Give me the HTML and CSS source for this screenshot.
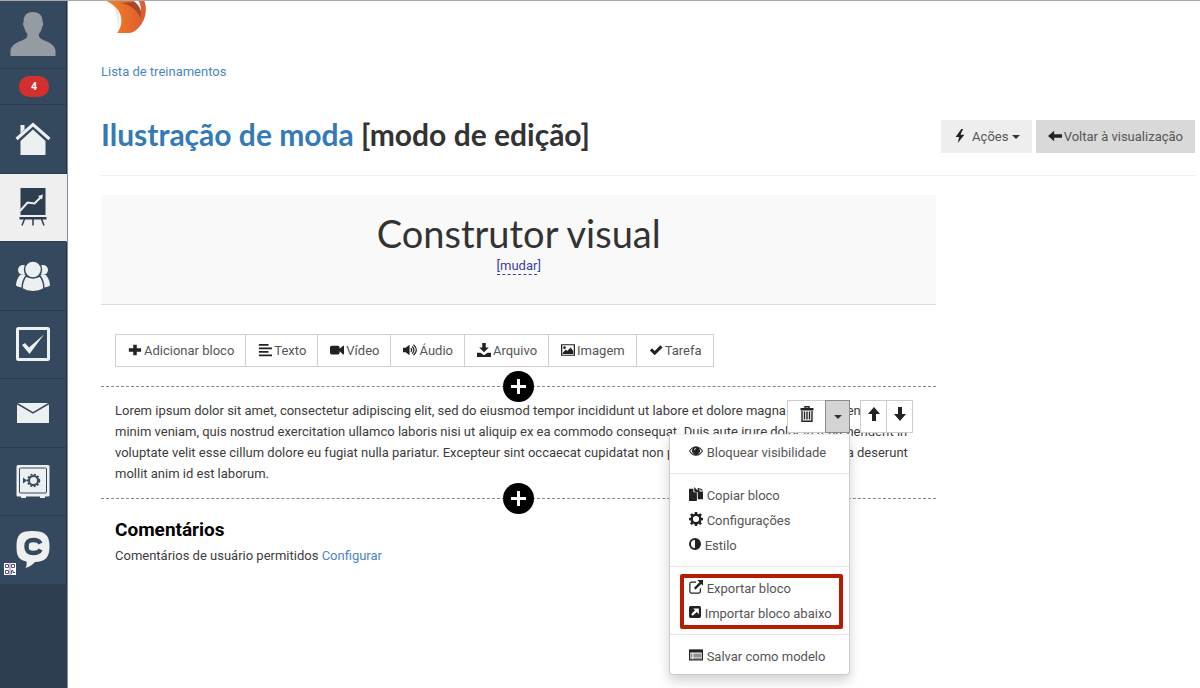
FILE: index.html
```html
<!DOCTYPE html>
<html lang="pt-br">
  <head>
    <meta charset="UTF-8" />
    <meta name="viewport" content="width=device-width, initial-scale=1.0" />
    <title>Ilustração de moda</title>
    <link rel="stylesheet" href="styles.css">
  </head>

  <body>

    <nav class="sidebar">
      <a class="item perfil" href="#" aria-label="Perfil">
        <svg width="46" height="46" viewBox="0 0 46 46"><path fill="#959ba3" d="M23 1c6.500 0 9.800 4 9.600 10 1 .5.800 3.500-.8 6-.5 3-1.500 4.500-3 6 0 3 .8 4 3.500 5.500 5 2.500 12.500 4.500 13.200 11V45H.5v-5.500C1.200 33 9 31 14 28.500c2.700-1.500 3.500-2.500 3.500-5.500-1.500-1.500-2.500-3-3-6-1.600-2.500-1.800-5.500-.8-6C13.200 5 16.500 1 23 1z"/></svg>
      </a>
      <a class="item avisos" href="#" aria-label="Avisos"><span class="contador">4</span></a>
      <a class="item" href="#" aria-label="Início">
        <svg width="36" height="36" viewBox="0 0 36 36"><path fill="#ecf0f1" d="M5.500 4h4v4.500l-4 4zM18 8.500 30.500 20v14h-25V20z"/><path fill="none" stroke="#34495e" stroke-width="2" d="M2 20.500 18 6l16 14.500"/><path fill="none" stroke="#ecf0f1" stroke-width="3" d="M1.500 18 18 3.500 34.500 18"/></svg>
      </a>
      <a class="item ativo" href="#" aria-label="Treinamentos">
        <svg width="28" height="40" viewBox="0 0 28 40"><path fill="#2c3e50" d="M1.500 1h25v27h-25zM.5 30h27v2.500H.5z"/><path fill="none" stroke="#efefef" stroke-width="2" d="M1 24l7.500-8.500 7 1L22 10"/><path fill="#efefef" d="M19 9l5-1.500-1 5z"/><path fill="none" stroke="#2c3e50" stroke-width="1.500" d="M5.500 32 3 38.500M14 32v6.500M22.500 32l2.500 6.500"/></svg>
      </a>
      <a class="item" href="#" aria-label="Usuários">
        <svg width="36" height="32" viewBox="0 0 36 32"><g fill="#ecf0f1"><circle cx="8" cy="10" r="5"/><circle cx="28" cy="10" r="5"/><path d="M5 15c-2.500 3-4 7-4 10.500 2 1.500 5 2 7 2L11 15zM31 15c2.500 3 4 7 4 10.500-2 1.500-5 2-7 2L25 15z"/></g><g fill="#ecf0f1" stroke="#34495e" stroke-width="1.500"><path d="M11 16c3 1.500 11 1.500 14 0 3 4 4 9 3.800 13-6 3.500-15.600 3.500-21.600 0C7 25 8 20 11 16z"/><circle cx="18" cy="9.500" r="8.500"/></g></svg>
      </a>
      <a class="item" href="#" aria-label="Tarefas">
        <svg width="36" height="36" viewBox="0 0 36 36"><rect x="2.500" y="2.500" width="31" height="31" rx="1" fill="none" stroke="#ecf0f1" stroke-width="3"/><path fill="#ecf0f1" d="M7 19l3-2 4 4.500L29 8.500 14.500 28z"/></svg>
      </a>
      <a class="item" href="#" aria-label="Mensagens">
        <svg width="34" height="22" viewBox="0 0 34 22"><path fill="#ecf0f1" d="M1 1h32v20H1z"/><path fill="none" stroke="#34495e" stroke-width="1.500" d="M1 1.500l16 9.500 16-9.500"/></svg>
      </a>
      <a class="item" href="#" aria-label="Cofre">
        <svg width="36" height="36" viewBox="0 0 36 36"><path fill="#ecf0f1" d="M3 2h30q1.500 0 1.500 1.500v29q0 1-1.500 1h-3V35h-5v-1.500H11V35H6v-1.500H3q-1.500 0-1.500-1v-29Q1.500 2 3 2z"/><rect x="4.500" y="5" width="27" height="25" rx="1" fill="none" stroke="#34495e"/><circle cx="18.500" cy="17.500" r="4.500" fill="none" stroke="#34495e" stroke-width="2"/><circle cx="18.500" cy="17.500" r="6" fill="none" stroke="#34495e" stroke-width="1.500" stroke-dasharray="2 1.500"/><path fill="#34495e" d="M8 14.500l4 3-4 3z"/></svg>
      </a>
      <a class="item" href="#" aria-label="Suporte">
        <svg width="36" height="40" viewBox="0 0 36 40"><path fill="#efefef" d="M17 1c13 0 17.500 4 17.500 15.500S30 31.500 20 32c-2.500 3-6 5-9.500 6 1-2 1.500-4 1-6.500C3.500 30 1.500 26 1.500 16.500 1.500 5 5 1 17 1z"/><path fill="none" stroke="#34495e" stroke-width="4.500" d="M25.500 13.500C24 10.500 22 10 18.500 10c-5.500 0-7 2-7 6.500s1.500 6.500 7 6.500c3.500 0 5.500-.5 7-3.500"/></svg>
        <svg class="qr" width="12" height="12" viewBox="0 0 12 12"><path fill="#fff" d="M0 0h12v12H0z"/><path fill="none" stroke="#4a5a70" d="M1.500 1.500h3v3h-3zM7.500 1.500h3v3h-3zM1.500 7.500h3v3h-3zM7.500 11V7.500H9v2h2"/><path stroke="#b05fd0" d="M6 0v12"/></svg>
      </a>
    </nav>

    <main class="conteudo">
      <a class="logo" href="#" aria-label="Página inicial">
        <svg width="48" height="33" viewBox="0 0 48 34"><defs><linearGradient id="laranja"><stop offset="0" stop-color="#f58220"/><stop offset="1" stop-color="#dc5a32"/></linearGradient></defs><path fill="#e5e5e5" d="M9 1c8 5 10 14 8 27C17 18 15 8 9 1z"/><path fill="url(#laranja)" d="M5 0h39c3 9 1 17-2 22-4 7-9 11-14 11H16c7-10 7-24-11-33z"/><path fill="#a8482a" d="M19 2c9 1 17 6 21 16 1-6 0-12-5-17z"/><path fill="#fff" d="M33 0h5c2 3 2.500 7 2.500 10C39 6 37 3 33 0z"/></svg>
      </a>

      <a class="voltar-lista" href="#">Lista de treinamentos</a>

      <header class="topo">
        <h1><a href="#">Ilustração de moda</a> [modo de edição]</h1>
        <div class="acoes">
          <button class="btn-acoes" type="button"><svg class="icone" viewBox="0 0 16 16"><path d="M9.500 0 3 9h4l-1.500 7L13 6.500H8.500L11.500 0z"/></svg> Ações <span class="seta"></span></button>
          <button class="btn-voltar" type="button"><svg class="icone" viewBox="0 0 16 16"><path d="M0 8l7-6v4h9v4H7v4z"/></svg>Voltar à visualização</button>
        </div>
      </header>

      <div class="grade">
        <section class="construtor">
          <div class="cabecalho">
            <h2>Construtor visual</h2>
            <a href="#"><span>[mudar</span>]</a>
          </div>

          <div class="barra">
            <button type="button"><svg class="icone" viewBox="0 0 16 16"><path d="M6 2h4v4h5v4h-5v4H6v-4H1V6h5z"/></svg>Adicionar bloco</button>
            <button type="button"><svg class="icone" viewBox="0 0 16 16"><path d="M1 1h11v2H1zM1 5h15v2H1zM1 9h11v2H1zM1 13h15v2H1z"/></svg>Texto</button>
            <button type="button"><svg class="icone" viewBox="0 0 16 16"><path d="M2 3h7q2 0 2 2v1.500L15 3h1v10h-1l-4-3.500V11q0 2-2 2H2q-2 0-2-2V5q0-2 2-2z"/></svg>Vídeo</button>
            <button type="button"><svg class="icone" viewBox="0 0 16 16"><path d="M0 5.500h3L7.500 2v12L3 10.500H0z"/><path class="traco" d="M9 6q2 2 0 4M10.500 4q4 4 0 8M12 2q6.500 6 0 12"/></svg>Áudio</button>
            <button type="button"><svg class="icone" viewBox="0 0 16 16"><path d="M6 0h4v5h3.500L8 10.500 2.500 5H6zM0 11h4l4 3 4-3h4v5H0z"/></svg>Arquivo</button>
            <button type="button"><svg class="icone" viewBox="0 0 16 16"><path class="traco" d="M.7 2h14.600v12H.7z"/><path d="M2 12.500V11l3.500-3.500L7 9l4-4 3 4v3.500z"/><circle cx="4" cy="5.300" r="1.500"/></svg>Imagem</button>
            <button type="button"><svg class="icone" viewBox="0 0 16 16"><path d="M1 8.500 3.500 6l3 3L13 2.500 15.500 5l-9 9z"/></svg>Tarefa</button>
          </div>

          <div class="bloco">
            <button class="mais mais-cima" type="button" aria-label="Adicionar bloco acima"><svg width="15" height="15" viewBox="0 0 15 15"><path d="M6 0h3v6h6v3H9v6H6V9H0V6h6z"/></svg></button>
            <p>Lorem ipsum dolor sit amet, consectetur adipiscing elit, sed do eiusmod tempor incididunt ut labore et dolore magna aliqua. Ut enim ad minim veniam, quis nostrud exercitation ullamco laboris nisi ut aliquip ex ea commodo consequat. Duis aute irure dolor in reprehenderit in voluptate velit esse cillum dolore eu fugiat nulla pariatur. Excepteur sint occaecat cupidatat non proident, sunt in culpa qui officia deserunt mollit anim id est laborum.</p>

            <div class="ferramentas">
              <div class="grupo">
                <button class="lixeira" type="button" aria-label="Excluir"><svg class="icone" viewBox="0 0 16 16"><path class="traco" d="M6 2V.7h4V2M3 5v10.300h10V5M5.500 5.500v8M8 5.500v8M10.500 5.500v8"/><path d="M1.500 2h13v2.500h-13z"/></svg></button>
                <button class="abrir" type="button" aria-label="Mais opções"><span class="seta"></span></button>
                <div class="menu">
                  <a href="#"><svg class="icone" viewBox="0 0 16 16"><path d="M8 2.500c3.500 0 6.300 2.500 8 5.500-1.700 3-4.500 5.500-8 5.500S1.700 11 0 8c1.700-3 4.500-5.500 8-5.500z"/><path fill="#fff" d="M4.500 4.800A7 7 0 0 0 1.300 8c1.200 2 3.800 4.300 6.700 4.300S13.500 10 14.700 8a7 7 0 0 0-3.200-3.200 4.500 4.500 0 1 1-7 0z"/><path fill="#fff" d="M5.800 7A2.400 2.400 0 0 1 8 4.500v.9A1.500 1.500 0 0 0 6.700 7z"/></svg> Bloquear visibilidade</a>
                  <hr>
                  <a href="#"><svg class="icone" viewBox="0 0 16 16"><path d="M0 2h5v4h4v10H0z"/><path d="M6 0v5l4 1v8h6V5h-4V1h-2v3L7 1zM13 1v3h3zM6 2v3h3z"/></svg> Copiar bloco</a>
                  <a href="#"><svg class="icone" viewBox="0 0 16 16"><path fill-rule="evenodd" d="M6.700 0h2.600l.5 2.200 1.300.5L13 1.500l1.700 1.700-1.200 1.900.6 1.500 1.900.3v2.500l-2 .4-.6 1.400 1.300 1.900-1.700 1.700-2-1.300-1.300.5L9.300 16H6.700l-.4-2-1.400-.5-2 1.300-1.700-1.700 1.300-1.900-.6-1.400-1.900-.4V6.900l1.900-.3.6-1.500-1.200-1.900L3 1.500l1.900 1.200 1.300-.5zM8 4.500a3.500 3.500 0 1 0 0 7 3.500 3.500 0 0 0 0-7z"/></svg> Configurações</a>
                  <a class="curto" href="#"><svg class="icone" viewBox="0 0 14 16"><path fill-rule="evenodd" d="M7 1a7 7 0 1 1 0 14A7 7 0 0 1 7 1zm0 2.300a4.700 4.700 0 0 0 0 9.400z"/></svg> Estilo</a>
                  <hr>
                  <div class="destaque">
                    <a href="#"><svg class="icone" viewBox="0 0 16 16"><path class="traco" d="M8 2.500H3Q1 2.500 1 4.500V13q0 2 2 2h8q2 0 2-2V9.500"/><path d="M9.500 0H16v6.500l-2-2-6.500 6.400-1.900-1.900L12 2.500z"/></svg> Exportar bloco</a>
                    <a class="curto" href="#"><svg class="icone" viewBox="0 0 14 16"><path fill-rule="evenodd" d="M2 1h10q2 0 2 2v10q0 2-2 2H2q-2 0-2-2V3q0-2 2-2zM5 4l2 2-4.500 4.700L4.300 12.500 9 8l2.500 2.500V4z"/></svg> Importar bloco abaixo</a>
                  </div>
                  <hr>
                  <a href="#"><svg class="icone" viewBox="0 0 16 16"><path class="traco" d="M.7 2.500h14.600v11H.7z"/><path d="M0 2h16v3H0zM2 6.500h2v1H2zM2 8.700h2v1H2zM2 11h2v1H2zM5 6.500h9v1H5zM5 8.700h9v1H5zM5 11h9v1H5z"/></svg> Salvar como modelo</a>
                </div>
              </div>
              <div class="grupo">
                <button type="button" aria-label="Mover para cima"><svg class="icone" viewBox="0 0 16 16"><path d="M8 1l6 7h-4v7H6V8H2z"/></svg></button>
                <button type="button" aria-label="Mover para baixo"><svg class="icone" viewBox="0 0 16 16"><path d="M8 15l6-7h-4V1H6v7H2z"/></svg></button>
              </div>
            </div>
            <button class="mais mais-baixo" type="button" aria-label="Adicionar bloco abaixo"><svg width="15" height="15" viewBox="0 0 15 15"><path d="M6 0h3v6h6v3H9v6H6V9H0V6h6z"/></svg></button>
          </div>

          <div class="comentarios">
            <h3>Comentários</h3>
            <p>Comentários de usuário permitidos <a href="#">Configurar</a></p>
          </div>
        </section>
      </div>
    </main>

  </body>
</html>
```
FILE: styles.css
```css
* {
  box-sizing: border-box;
}

body {
  margin: 0;
  min-height: 100vh;
  display: flex;
  border-top: 1px solid #a9a9ab;
  background-color: #fff;
  color: #3c3c3c;
  font-family: Roboto, "Liberation Sans", sans-serif;
  font-size: 13px;
  line-height: 21px;
}

a {
  color: #4a86bf;
  text-decoration: none;
}

h1, h2, h3, p {
  margin: 0;
}

button {
  font: inherit;
  color: #555;
  cursor: pointer;
}

/* menu lateral */
.sidebar {
  flex: none;
  width: 68px;
  background-color: #2c3e50;
  border-right: 1px solid #7f8b99;
}

.item {
  position: relative;
  display: flex;
  align-items: center;
  justify-content: center;
  height: 69px;
  padding-bottom: 1px;
  background-color: #34495e;
  border-bottom: 1px solid #2a3c50;
  border-right: 1px solid #22374f;
}

.item:nth-child(even) {
  height: 68px;
}

.item.perfil {
  height: 68px;
}

.item.avisos {
  height: 36px;
  padding: 0;
}

.contador {
  width: 30px;
  margin-left: 2px;
  border-radius: 10px;
  background-color: #d32f2f;
  color: #fff;
  font-family: "Open Sans", sans-serif;
  font-size: 10px;
  font-weight: bold;
  text-align: center;
}

.item.ativo {
  background-color: #efefef;
  border-right-color: #efefef;
}

.qr {
  position: absolute;
  left: 4px;
  bottom: 9px;
}

/* conteudo */
.conteudo {
  flex: 1;
  min-width: 0;
  padding: 0 5px 0 33px;
}

.logo {
  display: block;
  height: 33px;
}

.voltar-lista {
  display: block;
  margin-top: 27px;
}

.topo {
  display: flex;
  justify-content: space-between;
  align-items: center;
  height: 81px;
  margin-top: 13px;
  margin-bottom: 19px;
  border-bottom: 1px solid #eee;
}

.topo h1 {
  padding-bottom: 2px;
  color: #333;
  font-family: Lato, sans-serif;
  font-size: 30px;
  line-height: 36px;
  font-weight: bold;
}

.topo h1 a {
  color: #337ab7;
}

.acoes {
  display: flex;
  gap: 4px;
  padding-top: 2px;
}

.acoes button {
  height: 33px;
  padding: 0 12px;
  border: none;
  background-color: #eee;
}

.acoes .btn-voltar {
  background-color: #d9d9d9;
}

.icone {
  width: 14px;
  height: 14px;
  margin-right: 2px;
  vertical-align: -2px;
  fill: #222;
}

.traco {
  fill: none;
  stroke: #222;
  stroke-width: 1.4;
}

.seta {
  display: inline-block;
  border-top: 4px solid #333;
  border-left: 4px solid transparent;
  border-right: 4px solid transparent;
  vertical-align: 2px;
}

.grade {
  display: grid;
  grid-template-columns: minmax(0, 42fr) 13fr;
}

.cabecalho {
  height: 110px;
  padding-top: 17px;
  text-align: center;
  background-color: #f9f9f9;
  border-bottom: 1px solid #ddd;
}

.cabecalho h2 {
  margin-bottom: 1px;
  color: #333;
  font-family: Lato, sans-serif;
  font-size: 38px;
  line-height: 42px;
  font-weight: normal;
}

.cabecalho a {
  color: #3c3ca8;
}

.cabecalho span {
  padding-bottom: 1px;
  border-bottom: 1px dashed #3c3ca8;
}

.barra {
  display: flex;
  padding: 29px 14px 19px;
}

.barra button {
  height: 33px;
  margin-right: -1px;
  padding: 0 11px 1px 12px;
  border: 1px solid #d0d0d0;
  background-color: #fff;
}

.bloco {
  position: relative;
  padding: 13px 14px 14px;
  border-top: 1px dashed #888;
  border-bottom: 1px dashed #888;
}

.mais {
  position: absolute;
  left: 50%;
  display: flex;
  align-items: center;
  justify-content: center;
  width: 31px;
  height: 31px;
  margin-left: -16px;
  padding: 0;
  border: none;
  border-radius: 50%;
  background-color: #000;
}

.mais svg {
  fill: #fff;
}

.mais-cima {
  top: -16px;
}

.mais-baixo {
  bottom: -16px;
}

.ferramentas {
  position: absolute;
  top: 13px;
  right: 23px;
  display: flex;
  gap: 10px;
}

.grupo {
  position: relative;
  display: flex;
}

.grupo button {
  width: 27px;
  height: 33px;
  padding: 0 0 5px;
  border: 1px solid #ccc;
  background-color: #fff;
}

.grupo button + button {
  margin-left: -1px;
}

.grupo button .icone {
  width: 16px;
  height: 16px;
  margin: 0;
  vertical-align: -3px;
}

.grupo .lixeira {
  width: 39px;
}

.grupo .abrir {
  width: 25px;
  padding: 0;
  background-color: #d4d4d4;
  border-color: #8c8c8c;
}

.menu {
  position: absolute;
  top: 34px;
  right: 0;
  z-index: 2;
  width: 181px;
  padding: 5px 0;
  border: 1px solid #ccc;
  border-top-color: #eee;
  border-radius: 0 0 4px 4px;
  background-color: #fff;
  box-shadow: 0 6px 12px rgba(0, 0, 0, 0.18);
}

.menu a {
  display: block;
  padding-left: 19px;
  line-height: 25px;
  color: #555;
  white-space: nowrap;
}

.menu .icone {
  margin-right: 0;
  vertical-align: -1px;
}

.menu .curto .icone {
  width: 12px;
}

.menu hr {
  height: 1px;
  margin: 8px 0 9px;
  border: none;
  background-color: #e5e5e5;
}

.destaque {
  position: relative;
}

/* moldura em volta de exportar e importar */
.destaque::after {
  content: "";
  position: absolute;
  inset: -2px 6px -3px 10px;
  border: 4px solid #b71c00;
  border-radius: 2px;
  pointer-events: none;
}

.comentarios {
  padding: 18px 14px;
}

.comentarios h3 {
  color: #000;
  font-size: 19px;
  line-height: 26px;
  font-weight: bold;
}

.comentarios p {
  margin-top: 2px;
}
```
